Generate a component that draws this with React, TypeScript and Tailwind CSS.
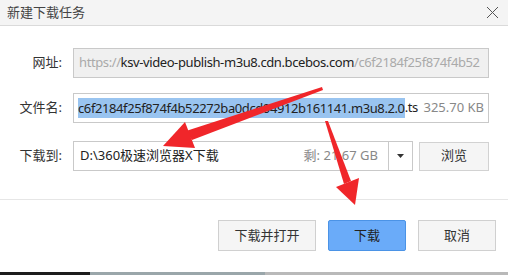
import React from 'react';

const font = { fontFamily: '"Segoe UI", "Noto Sans", "Noto Sans CJK SC", sans-serif' };

const Arrows: React.FC = () => (
  <svg className="absolute inset-0 pointer-events-none" width={508} height={275} viewBox="0 0 508 275">
    {/* arrow to the folder field */}
    <polygon points="322,87 323,90 192,140 186,131" fill="#f0262a" />
    <polygon points="163,146 185,122 195,148" fill="#f0262a" />
    {/* arrow to the download button */}
    <polygon points="325,121 328,121 351,181 344,184" fill="#f0262a" />
    <polygon points="355,205 336,187 359,178" fill="#f0262a" />
  </svg>
);

export default function App() {
  return (
    <div className="relative w-[508px] h-[275px] overflow-hidden bg-white text-[#333]" style={font}>
      {/* title bar */}
      <div className="flex items-center justify-between h-[26px] pl-[7px] pr-[9px] bg-[#f4f4f4] border-b border-[#dadada]">
        <span className="text-[13px] text-[#444]">新建下载任务</span>
        <svg width="13" height="13" viewBox="0 0 13 13" className="text-[#555]">
          <path d="M1 1 L12 12 M12 1 L1 12" stroke="currentColor" strokeWidth="1" />
        </svg>
      </div>

      <div className="pr-[19px] pt-[22px] text-[13px]">
        {/* url */}
        <div className="flex items-center">
          <span className="w-[62px] text-right">网址:</span>
          <div className="ml-[11px] flex-1 h-[30px] flex items-center px-[5px] bg-[#f0f0f0] border border-[#c9c9c9] overflow-hidden whitespace-nowrap tracking-[-0.4px]">
            <span className="text-[#aaa]">https://</span>
            <span className="text-[#222]">ksv-video-publish-m3u8.cdn.bcebos.com</span>
            <span className="text-[#aaa]">/c6f2184f25f874f4b52</span>
          </div>
        </div>

        {/* file name */}
        <div className="flex items-center mt-[15px]">
          <span className="w-[62px] text-right">文件名:</span>
          <div className="ml-[11px] flex-1 h-[30px] flex items-center pl-[4px] pr-[4px] bg-white border border-[#c9c9c9] overflow-hidden whitespace-nowrap tracking-[-0.4px]">
            <span className="bg-[#99c4f0] text-[#222] leading-[20px]">c6f2184f25f874f4b52272ba0dcd04912b161141.m3u8.2.0</span>
            <span className="text-[#222]">.ts</span>
            <span className="ml-auto text-[#888] tracking-normal">325.70 KB</span>
          </div>
        </div>

        {/* save to */}
        <div className="flex items-center mt-[18px]">
          <span className="w-[62px] text-right">下载到:</span>
          <div className="ml-[11px] flex-1 h-[30px] flex border border-[#c9c9c9] bg-white">
            <div className="flex-1 flex items-center pl-[6px] pr-[10px] whitespace-nowrap">
              <span className="text-[#222]">D:\360极速浏览器X下载</span>
              <span className="ml-auto text-[#888]">剩: 21.67 GB</span>
            </div>
            <div className="w-[24px] flex items-center justify-center border-l border-[#c9c9c9]">
              <svg width="7" height="4" viewBox="0 0 7 4"><path d="M0 0 H7 L3.5 4 Z" fill="#333" /></svg>
            </div>
          </div>
          <button className="ml-[6px] w-[70px] h-[29px] bg-[#f5f5f5] border border-[#d2d2d2] text-[#333]">浏览</button>
        </div>
      </div>

      <div className="mt-[28px] border-t border-[#e6e6e6]" />

      {/* actions */}
      <div className="flex justify-end gap-[12px] pr-[12px] pt-[20px] text-[13px]">
        <button className="w-[98px] h-[31px] bg-[#f5f5f5] border border-[#d0d0d0] text-[#333]">下载并打开</button>
        <button className="w-[78px] h-[31px] bg-[#6aabf9] border border-[#4b93e6] rounded-[2px] text-[#222]">下载</button>
        <button className="w-[78px] h-[31px] bg-[#f5f5f5] border border-[#d0d0d0] text-[#333]">取消</button>
      </div>

      {/* backdrop strip below dialog */}
      <div className="absolute left-0 right-0 bottom-0 h-[3px] flex">
        <div className="w-[90px] bg-[#1c1c1c]" />
        <div className="w-[175px] bg-[#9aa6aa]" />
        <div className="flex-1 bg-[#b9b9b9]" />
      </div>

      <Arrows />
    </div>
  );
}
